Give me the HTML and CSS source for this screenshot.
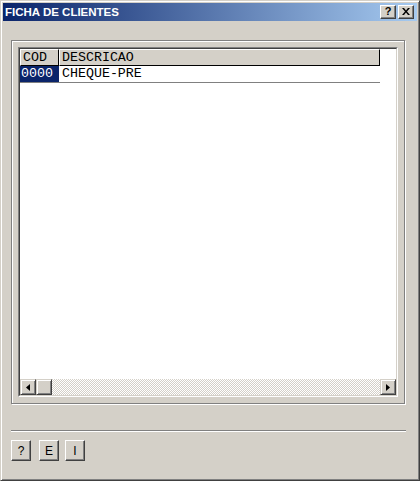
FILE: index.html
```html
<!DOCTYPE html>
<html lang="pt">
<head>
  <meta charset="UTF-8" />
  <title>Ficha de Clientes</title>
  <link rel="stylesheet" href="styles.css">
</head>
<body>
  <div class="window">
    <div class="titlebar">
      <span class="title">FICHA DE CLIENTES</span>
      <div class="title-buttons">
        <button class="tbtn help">?</button>
        <button class="tbtn close">
          <svg width="8" height="7" viewBox="0 0 8 7">
            <path d="M0 0h2l2 2.5 2-2.5h2L5 3.5 8 7H6L4 4.5 2 7H0l3-3.5z" fill="#000"/>
          </svg>
        </button>
      </div>
    </div>

    <div class="client">
      <div class="group">
        <div class="grid">
          <div class="grid-inner">
            <div class="grid-head">
              <div class="hcell col-cod">COD</div>
              <div class="hcell col-desc">DESCRICAO</div>
            </div>
            <div class="grid-row">
              <div class="cell col-cod selected">0000</div>
              <div class="cell col-desc">CHEQUE-PRE</div>
            </div>
            <div class="grid-body"></div>
            <div class="hscroll">
              <div class="sbtn">
                <svg width="4" height="7" viewBox="0 0 4 7"><path d="M4 0v7L0 3.5z" fill="#000"/></svg>
              </div>
              <div class="sbtn"></div>
              <div class="track"></div>
              <div class="sbtn">
                <svg width="4" height="7" viewBox="0 0 4 7"><path d="M0 0v7l4-3.5z" fill="#000"/></svg>
              </div>
            </div>
          </div>
        </div>
      </div>

      <div class="separator"></div>

      <div class="toolbar">
        <button class="btn btn-help">?</button>
        <button class="btn btn-e">E</button>
        <button class="btn btn-i">I</button>
      </div>
    </div>
  </div>
</body>
</html>
```

FILE: styles.css
```css
* {
  margin: 0;
  padding: 0;
  box-sizing: border-box;
}

body {
  background-color: #d4d0c8;
  font-family: 'Liberation Sans', Arial, sans-serif;
}

.window {
  width: 420px;
  height: 481px;
  background-color: #d4d0c8;
  border: 1px solid;
  border-color: #d4d0c8 #404040 #404040 #d4d0c8;
  box-shadow: inset 1px 1px 0 #fff, inset -1px -1px 0 #808080;
  padding: 2px;
  display: flex;
  flex-direction: column;
}

/* title bar */
.titlebar {
  height: 18px;
  background: linear-gradient(to right, #0a246a, #a6caf0);
  display: flex;
  align-items: center;
  justify-content: space-between;
  padding-left: 2px;
  padding-right: 3px;
}

.title {
  color: #fff;
  font-weight: bold;
  font-size: 11.5px;
}

.title-buttons {
  display: flex;
  gap: 2px;
}

.tbtn {
  width: 16px;
  height: 14px;
  background-color: #d4d0c8;
  border: 1px solid;
  border-color: #fff #404040 #404040 #fff;
  box-shadow: inset -1px -1px 0 #808080;
  font-family: 'Liberation Sans', Arial, sans-serif;
  font-weight: bold;
  font-size: 11px;
  line-height: 11px;
  color: #000;
  display: flex;
  align-items: center;
  justify-content: center;
  padding-bottom: 1px;
}

/* client area */
.client {
  flex: 1;
  display: flex;
  flex-direction: column;
}

.group {
  margin: 19px 0 0 8px;
  width: 394px;
  height: 364px;
  border: 1px solid #808080;
  box-shadow: 1px 1px 0 #fff, inset 1px 1px 0 #fff;
  padding: 6px 0 0 6px;
}

.grid {
  width: 380px;
  height: 350px;
  border: 1px solid;
  border-color: #808080 #fff #fff #808080;
}

.grid-inner {
  height: 100%;
  border: 1px solid;
  border-color: #404040 #d4d0c8 #d4d0c8 #404040;
  background-color: #fff;
  display: flex;
  flex-direction: column;
  font-family: 'Liberation Mono', 'Courier New', monospace;
  font-size: 13.3px;
  color: #000;
}

.grid-head,
.grid-row {
  display: flex;
  width: 360px;
  height: 17px;
}

.hcell {
  height: 17px;
  background-color: #d4d0c8;
  border: 1px solid;
  border-color: #fff #000 #000 #fff;
  padding-left: 2px;
  line-height: 15px;
}

.col-cod {
  width: 39px;
}

.col-desc {
  width: 321px;
}

.grid-row {
  border-bottom: 1px solid #808080;
}

.cell {
  line-height: 16px;
  padding-left: 3px;
}

.cell.selected {
  background-color: #0a246a;
  color: #fff;
  padding-left: 1px;
}

.grid-body {
  flex: 1;
}

.hscroll {
  height: 16px;
  display: flex;
}

.sbtn {
  width: 16px;
  height: 16px;
  background-color: #d4d0c8;
  border: 1px solid;
  border-color: #d4d0c8 #404040 #404040 #d4d0c8;
  box-shadow: inset 1px 1px 0 #fff, inset -1px -1px 0 #808080;
  display: flex;
  align-items: center;
  justify-content: center;
}

.track {
  flex: 1;
  background: repeating-conic-gradient(#fff 0 25%, #d4d0c8 0 50%) 0 0 / 2px 2px;
}

/* bottom */
.separator {
  margin: 26px 0 0 8px;
  width: 395px;
  height: 2px;
  border-top: 1px solid #808080;
  border-bottom: 1px solid #fff;
}

.toolbar {
  display: flex;
  margin: 8px 0 0 8px;
}

.btn {
  width: 20px;
  height: 21px;
  background-color: #d4d0c8;
  border: 1px solid;
  border-color: #fff #404040 #404040 #fff;
  box-shadow: inset -1px -1px 0 #808080;
  font-family: 'Liberation Sans', Arial, sans-serif;
  font-size: 12px;
  color: #000;
}

.btn-e {
  margin-left: 8px;
}

.btn-i {
  margin-left: 6px;
}
```
